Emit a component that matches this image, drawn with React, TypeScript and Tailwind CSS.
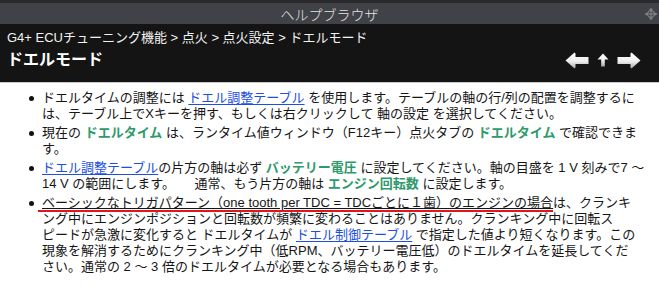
import type { ReactNode } from 'react'

const body = '"Liberation Sans", "Noto Sans CJK JP", sans-serif'

function Link({ children }: { children: ReactNode }) {
  return <span className="text-[#1d4fe0] underline underline-offset-2">{children}</span>
}

function Term({ children }: { children: ReactNode }) {
  return <span className="font-bold text-[#2e9a6c]">{children}</span>
}

function MoveIcon() {
  return (
    <svg width="12" height="12" viewBox="0 0 12 12" fill="none" stroke="#8a8a8e" strokeWidth="1">
      <circle cx="6" cy="6" r="3.5" />
      <path d="M6 0.5 V11.5 M0.5 6 H11.5" />
      <path d="M4.5 2 L6 0.5 L7.5 2 M4.5 10 L6 11.5 L7.5 10 M2 4.5 L0.5 6 L2 7.5 M10 4.5 L11.5 6 L10 7.5" />
    </svg>
  )
}

function NavArrows() {
  return (
    <div className="flex items-center gap-[8px]">
      <svg width="24" height="17" viewBox="0 0 24 17">
        <defs>
          <linearGradient id="ag" x1="0" y1="0" x2="0" y2="1">
            <stop offset="0" stopColor="#ffffff" />
            <stop offset="0.55" stopColor="#eeeeee" />
            <stop offset="1" stopColor="#a8a8a8" />
          </linearGradient>
        </defs>
        <path d="M0.5 8.5 L9.5 0.5 L10.5 1.5 L10.5 5 L23.5 5 L23.5 12 L10.5 12 L10.5 15.5 L9.5 16.5 Z" fill="url(#ag)" />
      </svg>
      <svg width="12" height="14" viewBox="0 0 12 14">
        <path d="M6 0.5 L11.5 6.5 L7.8 6.5 L7.8 13.5 L4.2 13.5 L4.2 6.5 L0.5 6.5 Z" fill="url(#ag)" />
      </svg>
      <svg width="24" height="17" viewBox="0 0 24 17">
        <path d="M23.5 8.5 L14.5 0.5 L13.5 1.5 L13.5 5 L0.5 5 L0.5 12 L13.5 12 L13.5 15.5 L14.5 16.5 Z" fill="url(#ag)" />
      </svg>
    </div>
  )
}

function Item({ children }: { children: ReactNode }) {
  return (
    <li className="flex">
      <div className="w-[13px] shrink-0 pt-[6px]">
        <span className="block w-[5px] h-[5px] rounded-full bg-[#111]" />
      </div>
      <div className="flex flex-col whitespace-pre">{children}</div>
    </li>
  )
}

export default function App() {
  return (
    <div className="w-[659px] h-[302px] overflow-hidden bg-white" style={{ fontFamily: body }}>
      <div className="h-[24px] border-t-[3px] border-[#2a2a2d] bg-[#414247] flex items-center justify-center relative">
        <span className="text-[14px] font-light text-[#e4e4e4] leading-none" style={{ fontFamily: '"Noto Sans CJK JP", sans-serif' }}>
          ヘルプブラウザ
        </span>
        <div className="absolute right-[2px] top-[5px]">
          <MoveIcon />
        </div>
      </div>

      <div className="h-[59px] bg-[#141414] px-[7px] pt-[6px] flex flex-col border-b border-[#c8c8c8]">
        <div className="text-[13px] leading-[16px] text-[#f2f2f2]">
          G4+ ECUチューニング機能 &gt; 点火 &gt; 点火設定 &gt; ドエルモード
        </div>
        <div className="flex items-center justify-between pr-[11px] mt-[4px]">
          <h1 className="text-[16px] leading-[20px] font-bold text-white">ドエルモード</h1>
          <NavArrows />
        </div>
      </div>

      <ul className="pl-[29px] pt-[7px] flex flex-col gap-[3px] text-[13px] leading-[16px] text-[#161616]">
        <Item>
          <span>
            ドエルタイムの調整には <Link>ドエル調整テーブル</Link> を使用します。テーブルの軸の行/列の配置を調整するに
          </span>
          <span>は、テーブル上でXキーを押す、もしくは右クリックして 軸の設定 を選択してください。</span>
        </Item>
        <Item>
          <span>
            現在の <Term>ドエルタイム</Term> は、ランタイム値ウィンドウ（F12キー）点火タブの <Term>ドエルタイム</Term> で確認できま
          </span>
          <span>す。</span>
        </Item>
        <Item>
          <span>
            <Link>ドエル調整テーブル</Link>の片方の軸は必ず <Term>バッテリー電圧</Term> に設定してください。軸の目盛を 1 V 刻みで7 ～
          </span>
          <span>
            14 V の範囲にします。　　通常、もう片方の軸は <Term>エンジン回転数</Term> に設定します。
          </span>
        </Item>
        <Item>
          <span>
            <span className="relative underline">
              ベーシックなトリガパターン（one tooth per TDC = TDCごとに１歯）のエンジンの場合
              <span className="absolute left-[-4px] right-0 bottom-[-2px] h-[2px] bg-[#e3141b]" />
            </span>
            は、クランキ
          </span>
          <span>ング中にエンジンポジションと回転数が頻繁に変わることはありません。クランキング中に回転ス</span>
          <span>
            ピードが急激に変化すると ドエルタイムが <Link>ドエル制御テーブル</Link> で指定した値より短くなります。この
          </span>
          <span>現象を解消するためにクランキング中（低RPM、バッテリー電圧低）のドエルタイムを延長してくだ</span>
          <span>さい。通常の 2 ～ 3 倍のドエルタイムが必要となる場合もあります。</span>
        </Item>
      </ul>
    </div>
  )
}
